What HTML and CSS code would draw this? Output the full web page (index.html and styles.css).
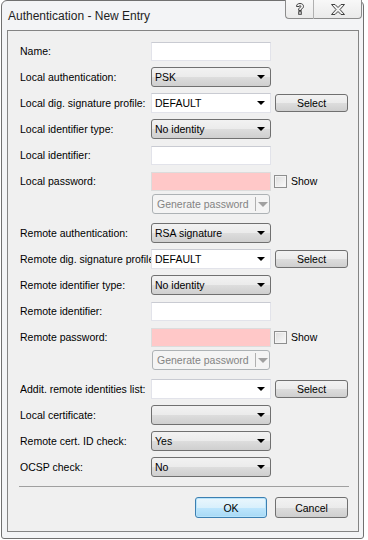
FILE: index.html
```html
<!DOCTYPE html>
<html lang="en">
<head>
    <meta charset="UTF-8">
    <title>Authentication - New Entry</title>
    <link rel="stylesheet" href="styles.css">
</head>
<body>
    <div class="window">
        <div class="titlebar">
            <span class="title">Authentication - New Entry</span>
            <div class="caption-buttons">
                <div class="cap-btn help">
                    <svg width="10" height="12" viewBox="0 0 10 12">
                        <path d="M1.5 3.5 C1.5 1.3 3 0.5 5 0.5 C7.3 0.5 8.5 1.8 8.5 3.4 C8.5 5 7.2 5.6 6.3 6.2 L6.3 7.5 L3.7 7.5 L3.7 5.6 C4.4 4.9 5.8 4.6 5.8 3.5 C5.8 2.9 5.5 2.6 5 2.6 C4.4 2.6 4.2 3 4.2 3.5 Z" fill="none" stroke="#404040" stroke-width="1"/>
                        <rect x="3.7" y="8.7" width="2.6" height="2.6" fill="none" stroke="#404040" stroke-width="1"/>
                    </svg>
                </div>
                <div class="cap-btn close">
                    <svg width="14" height="11" viewBox="0 0 14 11">
                        <path d="M0.5 0.5 L4 0.5 L7 3.5 L10 0.5 L13.5 0.5 L9 5.5 L13.5 10.5 L10 10.5 L7 7.5 L4 10.5 L0.5 10.5 L5 5.5 Z" fill="none" stroke="#404040" stroke-width="1"/>
                    </svg>
                </div>
            </div>
        </div>

        <div class="client">
            <div class="form">
                <div class="row">
                    <label>Name:</label>
                    <div class="edit"></div>
                </div>
                <div class="row">
                    <label>Local authentication:</label>
                    <div class="combo"><span>PSK</span><i class="arrow"></i></div>
                </div>
                <div class="row">
                    <label>Local dig. signature profile:</label>
                    <div class="combo editable"><span>DEFAULT</span><i class="arrow"></i></div>
                    <button class="btn select">Select</button>
                </div>
                <div class="row">
                    <label>Local identifier type:</label>
                    <div class="combo"><span>No identity</span><i class="arrow"></i></div>
                </div>
                <div class="row">
                    <label>Local identifier:</label>
                    <div class="edit"></div>
                </div>
                <div class="row">
                    <label>Local password:</label>
                    <div class="edit pink"></div>
                    <div class="check"><span class="box"></span>Show</div>
                </div>
                <div class="row gen-row">
                    <label></label>
                    <div class="split disabled"><span>Generate password</span><i class="split-arrow"><b class="arrow"></b></i></div>
                </div>

                <div class="row">
                    <label>Remote authentication:</label>
                    <div class="combo"><span>RSA signature</span><i class="arrow"></i></div>
                </div>
                <div class="row">
                    <label class="clip">Remote dig. signature profile</label>
                    <div class="combo editable"><span>DEFAULT</span><i class="arrow"></i></div>
                    <button class="btn select">Select</button>
                </div>
                <div class="row">
                    <label>Remote identifier type:</label>
                    <div class="combo"><span>No identity</span><i class="arrow"></i></div>
                </div>
                <div class="row">
                    <label>Remote identifier:</label>
                    <div class="edit"></div>
                </div>
                <div class="row">
                    <label>Remote password:</label>
                    <div class="edit pink"></div>
                    <div class="check"><span class="box"></span>Show</div>
                </div>
                <div class="row gen-row">
                    <label></label>
                    <div class="split disabled"><span>Generate password</span><i class="split-arrow"><b class="arrow"></b></i></div>
                </div>

                <div class="row">
                    <label>Addit. remote identities list:</label>
                    <div class="combo editable"><span></span><i class="arrow"></i></div>
                    <button class="btn select">Select</button>
                </div>
                <div class="row">
                    <label>Local certificate:</label>
                    <div class="combo"><span></span><i class="arrow"></i></div>
                </div>
                <div class="row">
                    <label>Remote cert. ID check:</label>
                    <div class="combo"><span>Yes</span><i class="arrow"></i></div>
                </div>
                <div class="row">
                    <label>OCSP check:</label>
                    <div class="combo"><span>No</span><i class="arrow"></i></div>
                </div>
            </div>

            <div class="separator"></div>

            <div class="actions">
                <button class="btn ok">OK</button>
                <button class="btn">Cancel</button>
            </div>
        </div>
    </div>
</body>
</html>
```
FILE: styles.css
```css
body {
    margin: 0;
    padding: 0;
    background-color: #ffffff;
    font-family: "Liberation Sans", Arial, sans-serif;
    font-size: 10.5px;
    color: #000000;
}

.window {
    width: 361px;
    height: 537px;
    margin-left: 1px;
    border: 1px solid #707070;
    border-radius: 6px 6px 3px 3px;
    background-color: #f3f4f6;
}

.titlebar {
    height: 29px;
    display: flex;
    justify-content: space-between;
    align-items: flex-start;
}

.title {
    font-size: 12px;
    margin: 8px 0 0 6px;
    color: #1e1e1e;
}

.caption-buttons {
    display: flex;
    margin-right: 1px;
    margin-top: -1px;
}

.cap-btn {
    height: 18px;
    display: flex;
    align-items: center;
    justify-content: center;
    border: 1px solid #8c8c8c;
    border-top: none;
    background: linear-gradient(#f8f8f8, #eaeaea);
}

.cap-btn.help {
    width: 27px;
    border-radius: 0 0 0 4px;
    border-right: none;
}

.cap-btn.close {
    width: 47px;
    border-radius: 0 0 4px 0;
    border-left: 1px solid #b0b0b0;
}

.client {
    margin: 0 4px 0 5px;
    height: 500px;
    border: 1px solid #848484;
    background-color: #f0f0f0;
}

.form {
    padding: 10px 0 0 12px;
}

.row {
    display: flex;
    align-items: center;
    height: 20px;
    margin-bottom: 6px;
}

.row label {
    width: 131px;
    flex: none;
    white-space: nowrap;
    overflow: hidden;
}

.gen-row {
    margin-top: -3px;
    margin-bottom: 9px;
}

.edit {
    width: 118px;
    height: 17px;
    background-color: #ffffff;
    border: 1px solid #e2e3ea;
    border-top-color: #c9cbd2;
}

.edit.pink {
    background-color: #ffc8c8;
    border-color: #dcdcdc;
}

.combo {
    width: 115px;
    height: 18px;
    border: 1px solid #707070;
    border-radius: 3px;
    background: linear-gradient(#f2f2f2 0%, #ebebeb 50%, #dddddd 51%, #cfcfcf 100%);
    display: flex;
    align-items: center;
    justify-content: space-between;
    padding: 0 0 0 3px;
}

.combo.editable {
    background: #ffffff;
    border: 1px solid #e2e3ea;
    border-top-color: #c9cbd2;
    border-radius: 0;
}

.combo span {
    flex: 1;
    white-space: nowrap;
}

.arrow {
    width: 0;
    height: 0;
    border-left: 4px solid transparent;
    border-right: 4px solid transparent;
    border-top: 4px solid #000000;
    margin-right: 5px;
}

.btn {
    font-family: "Liberation Sans", Arial, sans-serif;
    font-size: 10.5px;
    color: #000000;
    width: 73px;
    height: 21px;
    padding: 0;
    border: 1px solid #707070;
    border-radius: 3px;
    background: linear-gradient(#f2f2f2 0%, #ebebeb 50%, #dddddd 51%, #cfcfcf 100%);
}

.btn.select {
    height: 18px;
    margin-left: 4px;
}

.check {
    display: flex;
    align-items: center;
    margin-left: 3px;
    gap: 4px;
}

.check .box {
    width: 11px;
    height: 11px;
    border: 1px solid #8e8f8f;
    background: linear-gradient(135deg, #dcdcdc, #fbfbfb);
    box-shadow: inset 0 0 0 1px #f4f4f4;
}

.split {
    width: 116px;
    height: 18px;
    margin-left: 1px;
    border: 1px solid #adb2b5;
    border-radius: 3px;
    background-color: #f4f4f4;
    display: flex;
    align-items: center;
    color: #838383;
}

.split span {
    flex: 1;
    padding-left: 4px;
    white-space: nowrap;
}

.split-arrow {
    width: 13px;
    height: 14px;
    border-left: 1px solid #b0b0b0;
    display: flex;
    align-items: center;
    justify-content: center;
}

.split-arrow .arrow {
    border-top-color: #a0a0a0;
    border-left-width: 5px;
    border-right-width: 5px;
    border-top-width: 5px;
    margin: 0;
}

.separator {
    margin: 9px 9px 0 11px;
    height: 1px;
    background-color: #a0a0a0;
}

.actions {
    display: flex;
    justify-content: flex-end;
    gap: 8px;
    padding: 10px 10px 0 0;
}

.btn.ok {
    width: 72px;
    border-color: #3c7fb1;
    background: linear-gradient(#eaf6fd 0%, #d9f0fc 50%, #bee6fd 51%, #a7d9f5 100%);
    box-shadow: inset 0 0 0 1px #b8e4fb;
}
```
